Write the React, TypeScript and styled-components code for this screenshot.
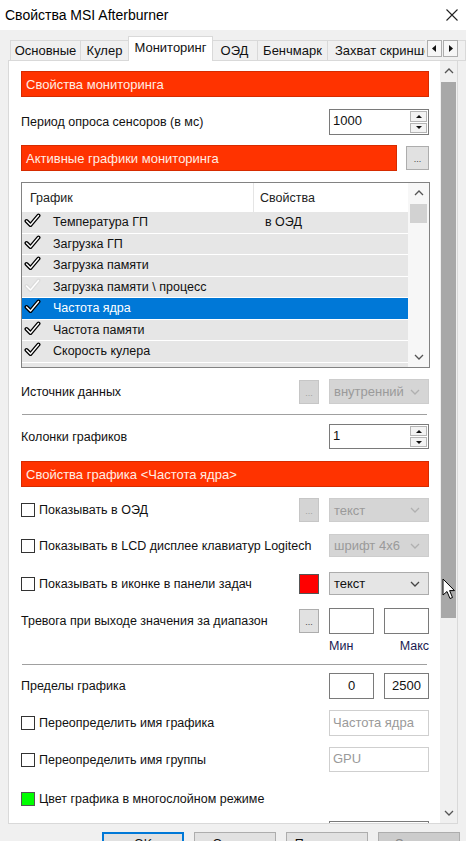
import styled, { createGlobalStyle } from "styled-components";

const GlobalStyle = createGlobalStyle`
  html, body {
    margin: 0;
    padding: 0;
  }
  body {
    font-family: "Liberation Sans", Arial, sans-serif;
    font-size: 12.5px;
    color: #111;
    background: #f0f0f0;
  }
  * {
    box-sizing: border-box;
  }
`;

interface IGraph {
  name: string;
  props?: string;
  checked: boolean;
  selected?: boolean;
}

const graphs: IGraph[] = [
  { name: "Температура ГП", props: "в ОЭД", checked: true },
  { name: "Загрузка ГП", checked: true },
  { name: "Загрузка памяти", checked: true },
  { name: "Загрузка памяти \\ процесс", checked: false },
  { name: "Частота ядра", checked: true, selected: true },
  { name: "Частота памяти", checked: true },
  { name: "Скорость кулера", checked: true },
];

const tabs = [
  { label: "Основные", w: 71 },
  { label: "Кулер", w: 48 },
  { label: "Мониторинг", w: 85, active: true },
  { label: "ОЭД", w: 46 },
  { label: "Бенчмарк", w: 70 },
];

function Chevron({ dir = "down", color = "#606060" }: { dir?: "up" | "down"; color?: string }) {
  return (
    <svg width="10" height="6" viewBox="0 0 10 6">
      <path
        d={dir === "down" ? "M1 1 L5 5 L9 1" : "M1 5 L5 1 L9 5"}
        fill="none"
        stroke={color}
        strokeWidth="1.3"
      />
    </svg>
  );
}

function CheckMark({ faint }: { faint?: boolean }) {
  return (
    <svg width="17" height="15" viewBox="0 0 17 15">
      <path
        d="M2.5 8 L6.5 12 L14.5 2.5"
        fill="none"
        stroke={faint ? "#dcdcdc" : "#000"}
        strokeWidth="4"
        strokeLinecap="round"
        strokeLinejoin="round"
      />
      <path
        d="M2.5 8 L6.5 12 L14.5 2.5"
        fill="none"
        stroke="#fff"
        strokeWidth="1.4"
        strokeLinecap="round"
        strokeLinejoin="round"
      />
    </svg>
  );
}

function Triangle({ dir }: { dir: "up" | "down" | "left" | "right" }) {
  const d = {
    up: "M1 4 L4 1 L7 4 Z",
    down: "M1 1 L4 4 L7 1 Z",
    left: "M5 0 L1 3.5 L5 7 Z",
    right: "M2 0 L6 3.5 L2 7 Z",
  }[dir];
  const vertical = dir === "up" || dir === "down";
  return (
    <svg width={vertical ? 8 : 7} height={vertical ? 5 : 7} viewBox={vertical ? "0 0 8 5" : "0 0 7 7"}>
      <path d={d} fill="#111" />
    </svg>
  );
}

function Spinner({ value }: { value: string }) {
  return (
    <SpinWrap>
      <SpinInput>{value}</SpinInput>
      <SpinButtons>
        <SpinButton>
          <Triangle dir="up" />
        </SpinButton>
        <SpinButton>
          <Triangle dir="down" />
        </SpinButton>
      </SpinButtons>
    </SpinWrap>
  );
}

function Combo({ value, disabled }: { value: string; disabled?: boolean }) {
  return (
    <Select $disabled={disabled}>
      <span>{value}</span>
      <Chevron color={disabled ? "#b0b0b0" : "#444"} />
    </Select>
  );
}

export default function App() {
  return (
    <Window>
      <GlobalStyle />
      <TitleBar>
        <span>Свойства MSI Afterburner</span>
        <svg width="12" height="12" viewBox="0 0 12 12">
          <path d="M0.5 0.5 L11.5 11.5 M11.5 0.5 L0.5 11.5" stroke="#222" strokeWidth="1.1" />
        </svg>
      </TitleBar>

      <TabStrip>
        {tabs.map((t) => (
          <Tab key={t.label} $w={t.w} $active={t.active}>
            {t.label}
          </Tab>
        ))}
        <LastTab>Захват скриншотов</LastTab>
        <TabArrows>
          <TabArrow>
            <Triangle dir="left" />
          </TabArrow>
          <TabArrow>
            <Triangle dir="right" />
          </TabArrow>
        </TabArrows>
      </TabStrip>

      <Panel>
        <Content>
          <SectionBar>Свойства мониторинга</SectionBar>

          <Row $mt={12} $h={26}>
            <Label>Период опроса сенсоров (в мс)</Label>
            <Cell $col={3}>
              <Spinner value="1000" />
            </Cell>
          </Row>

          <BarRow>
            <SectionBar $grow>Активные графики мониторинга</SectionBar>
            <DotsButton $w={23}>...</DotsButton>
          </BarRow>

          <ListBox>
            <ListBody>
              <ListHeader>
                <HeaderCell>График</HeaderCell>
                <HeaderCell $divider>Свойства</HeaderCell>
              </ListHeader>
              {graphs.map((g) => (
                <ListRow key={g.name} $selected={g.selected}>
                  <CheckCell>
                    <CheckMark faint={!g.checked} />
                  </CheckCell>
                  <span>{g.name}</span>
                  <PropCell>{g.props}</PropCell>
                </ListRow>
              ))}
              <ListRow />
            </ListBody>
            <ListScroll>
              <ScrollArrow>
                <Chevron dir="up" color="#555" />
              </ScrollArrow>
              <ListThumb />
              <ScrollSpacer />
              <ScrollArrow>
                <Chevron color="#555" />
              </ScrollArrow>
            </ListScroll>
          </ListBox>

          <Row $mt={11} $h={25}>
            <Label>Источник данных</Label>
            <DotsButton $disabled>...</DotsButton>
            <Combo value="внутренний" disabled />
          </Row>

          <Separator $mt={10} />

          <Row $mt={9} $h={25}>
            <Label>Колонки графиков</Label>
            <Cell $col={3}>
              <Spinner value="1" />
            </Cell>
          </Row>

          <SectionBar $mt={12}>Свойства графика &lt;Частота ядра&gt;</SectionBar>

          <Row $mt={11} $h={23}>
            <CheckLabel>
              <Box />
              Показывать в ОЭД
            </CheckLabel>
            <DotsButton $disabled>...</DotsButton>
            <Combo value="текст" disabled />
          </Row>

          <Row $mt={13} $h={23}>
            <CheckLabel $wide>
              <Box />
              Показывать в LCD дисплее клавиатур Logitech
            </CheckLabel>
            <Cell $col={3}>
              <Combo value="шрифт 4x6" disabled />
            </Cell>
          </Row>

          <Row $mt={15} $h={23}>
            <CheckLabel>
              <Box />
              Показывать в иконке в панели задач
            </CheckLabel>
            <Swatch $color="#ff0000" $size={20} />
            <Combo value="текст" />
          </Row>

          <Row $mt={13} $h={26}>
            <Label>Тревога при выходе значения за диапазон</Label>
            <DotsButton>...</DotsButton>
            <Pair>
              <TextBox />
              <TextBox />
            </Pair>
          </Row>

          <Row $mt={5} $h={16}>
            <Cell $col={3}>
              <RangeLabels>
                <span>Мин</span>
                <span>Макс</span>
              </RangeLabels>
            </Cell>
          </Row>

          <Separator $mt={9} />

          <Row $mt={8} $h={26}>
            <Label>Пределы графика</Label>
            <Cell $col={3}>
              <Pair>
                <TextBox $center>0</TextBox>
                <TextBox $center>2500</TextBox>
              </Pair>
            </Cell>
          </Row>

          <Row $mt={11} $h={26}>
            <CheckLabel>
              <Box />
              Переопределить имя графика
            </CheckLabel>
            <Cell $col={3}>
              <TextBox $disabled>Частота ядра</TextBox>
            </Cell>
          </Row>

          <Row $mt={11} $h={25}>
            <CheckLabel>
              <Box />
              Переопределить имя группы
            </CheckLabel>
            <Cell $col={3}>
              <TextBox $disabled>GPU</TextBox>
            </Cell>
          </Row>

          <Row $mt={18} $h={17}>
            <CheckLabel>
              <Swatch $color="#00ff00" $size={14} />
              Цвет графика в многослойном режиме
            </CheckLabel>
          </Row>

          <Row $mt={14} $h={26}>
            <Cell $col={3}>
              <TextBox />
            </Cell>
          </Row>
        </Content>

        <MainScroll>
          <ScrollArrow $h={20}>
            <Chevron dir="up" color="#555" />
          </ScrollArrow>
          <MainThumb />
          <ScrollSpacer />
          <ScrollArrow $h={20}>
            <Chevron color="#555" />
          </ScrollArrow>
        </MainScroll>
      </Panel>

      <ButtonBar>
        <DialogButton $primary>OK</DialogButton>
        <DialogButton>Отмена</DialogButton>
        <DialogButton>Применить</DialogButton>
        <DialogButton $disabled>Справка</DialogButton>
      </ButtonBar>

      <Cursor width="14" height="22" viewBox="0 0 14 22">
        <path
          d="M1 1 L1 17 L5 13.5 L8 20.5 L10.5 19.5 L7.6 12.6 L12.5 12.6 Z"
          fill="#fff"
          stroke="#000"
          strokeWidth="1"
          strokeLinejoin="round"
        />
      </Cursor>
    </Window>
  );
}

const Window = styled.div`
  position: relative;
  display: flex;
  flex-direction: column;
  width: 466px;
  height: 841px;
  overflow: hidden;
  background: #f0f0f0;

  & > * {
    flex-shrink: 0;
  }
`;

const TitleBar = styled.div`
  display: flex;
  align-items: center;
  justify-content: space-between;
  height: 30px;
  padding: 0 8px 0 5px;
  background: #fff;
  font-size: 14px;
  color: #000;
`;

const TabStrip = styled.div`
  position: relative;
  z-index: 1;
  display: flex;
  align-items: flex-end;
  height: 31px;
  padding-left: 10px;
  margin-bottom: -1px;
`;

const Tab = styled.div<{ $w: number; $active?: boolean }>`
  position: relative;
  flex: none;
  display: flex;
  align-items: center;
  justify-content: center;
  width: ${(p) => p.$w}px;
  height: ${(p) => (p.$active ? 25 : 21)}px;
  margin: 0 ${(p) => (p.$active ? -1 : 0)}px;
  border: 1px solid #d9d9d9;
  border-bottom: ${(p) => (p.$active ? "none" : "1px solid #d9d9d9")};
  border-left: ${(p) => (p.$active ? "1px solid #d9d9d9" : "none")};
  background: ${(p) => (p.$active ? "#fff" : "#f0f0f0")};
  z-index: ${(p) => (p.$active ? 2 : 1)};
  padding-bottom: ${(p) => (p.$active ? 4 : 0)}px;
  font-size: 13px;
  white-space: nowrap;

  &:first-child {
    border-left: 1px solid #d9d9d9;
  }
`;

const LastTab = styled.div`
  flex: 1;
  height: 21px;
  display: flex;
  align-items: center;
  padding-left: 7px;
  border: 1px solid #d9d9d9;
  border-left: none;
  background: #f0f0f0;
  overflow: hidden;
  white-space: nowrap;
  font-size: 13px;
`;

const TabArrows = styled.div`
  position: absolute;
  right: 8px;
  top: 10px;
  display: flex;
  gap: 1px;
  padding-left: 2px;
  background: #f0f0f0;
`;

const TabArrow = styled.div`
  display: flex;
  align-items: center;
  justify-content: center;
  width: 15px;
  height: 17px;
  border: 1px solid #adadad;
  background: #f6f6f6;
`;

const Panel = styled.div`
  display: flex;
  height: 764px;
  margin: 0 8px;
  background: #fff;
  border: 1px solid #d9d9d9;
`;

const Content = styled.div`
  flex: 1;
  display: flex;
  flex-direction: column;
  padding: 10px 11px 0 12px;
  overflow: hidden;

  & > * {
    flex-shrink: 0;
  }
`;

const SectionBar = styled.div<{ $mt?: number; $grow?: boolean }>`
  flex: ${(p) => (p.$grow ? "1 0 0" : "none")};
  display: flex;
  align-items: center;
  height: 26px;
  margin-top: ${(p) => p.$mt ?? 0}px;
  padding-left: 4px;
  background: #ff3300;
  border: 1px solid #d62b00;
  color: #ffeee4;
  font-size: 13px;
`;

const BarRow = styled.div`
  display: flex;
  align-items: center;
  gap: 9px;
  height: 26px;
  margin-top: 10px;
`;

const Row = styled.div<{ $mt: number; $h: number }>`
  display: grid;
  grid-template-columns: 1fr 20px 100px;
  column-gap: 10px;
  align-items: center;
  height: ${(p) => p.$h}px;
  margin-top: ${(p) => p.$mt}px;
`;

const Cell = styled.div<{ $col: number }>`
  grid-column: ${(p) => p.$col};
  height: 100%;
`;

const Label = styled.div`
  grid-column: 1;
  white-space: nowrap;
  color: #111;
`;

const CheckLabel = styled.div<{ $wide?: boolean }>`
  grid-column: ${(p) => (p.$wide ? "1 / span 2" : "1")};
  display: flex;
  align-items: center;
  gap: 4px;
  white-space: nowrap;
  color: #111;
`;

const Box = styled.span`
  flex: none;
  width: 14px;
  height: 14px;
  border: 1px solid #333;
  background: #fff;
`;

const Swatch = styled.span<{ $color: string; $size: number }>`
  flex: none;
  width: ${(p) => p.$size}px;
  height: ${(p) => p.$size}px;
  background: ${(p) => p.$color};
  border: 1px solid #555;
`;

const DotsButton = styled.div<{ $w?: number; $disabled?: boolean }>`
  flex: none;
  display: flex;
  align-items: flex-end;
  justify-content: center;
  width: ${(p) => p.$w ?? 20}px;
  height: 24px;
  padding-bottom: 5px;
  background: ${(p) => (p.$disabled ? "#d4d4d4" : "#e1e1e1")};
  border: 1px solid ${(p) => (p.$disabled ? "#c6c6c6" : "#adadad")};
  color: ${(p) => (p.$disabled ? "#a0a0a0" : "#444")};
  font-size: 9px;
  line-height: 1;
`;

const Select = styled.div<{ $disabled?: boolean }>`
  display: flex;
  align-items: center;
  justify-content: space-between;
  height: 100%;
  padding: 0 8px 0 4px;
  background: ${(p) => (p.$disabled ? "#d5d5d5" : "#e5e5e5")};
  border: 1px solid ${(p) => (p.$disabled ? "#cdcdcd" : "#acacac")};
  color: ${(p) => (p.$disabled ? "#9a9a9a" : "#111")};
  font-size: 13px;
`;

const SpinWrap = styled.div`
  display: flex;
  height: 100%;
  border: 1px solid #7a7a7a;
  background: #fff;
`;

const SpinInput = styled.div`
  flex: 1;
  padding: 3px 0 0 3px;
  font-size: 13px;
  color: #111;
`;

const SpinButtons = styled.div`
  display: flex;
  flex-direction: column;
  gap: 1px;
  width: 18px;
  padding: 1px 1px 1px 0;
`;

const SpinButton = styled.div`
  flex: 1;
  display: flex;
  align-items: center;
  justify-content: center;
  background: #f3f3f3;
  border: 1px solid #b5b5b5;
`;

const Pair = styled.div`
  display: flex;
  gap: 10px;
  height: 100%;
`;

const TextBox = styled.div<{ $center?: boolean; $disabled?: boolean }>`
  flex: 1;
  display: flex;
  align-items: center;
  justify-content: ${(p) => (p.$center ? "center" : "flex-start")};
  height: 100%;
  padding: 0 3px 2px;
  background: #fff;
  border: 1px solid ${(p) => (p.$disabled ? "#cfcfcf" : "#7a7a7a")};
  color: ${(p) => (p.$disabled ? "#9a9a9a" : "#111")};
  font-size: 13px;
`;

const RangeLabels = styled.div`
  display: flex;
  justify-content: space-between;
  font-size: 12.5px;
  color: #1a1a50;
`;

const Separator = styled.div<{ $mt: number }>`
  height: 1px;
  margin: ${(p) => p.$mt}px 2px 0 1px;
  background: #a0a0a0;
`;

const ListBox = styled.div`
  display: flex;
  height: 186px;
  margin: 11px -1px 0 0;
  border: 1px solid #828282;
  overflow: hidden;
`;

const ListBody = styled.div`
  flex: 1;
  display: flex;
  flex-direction: column;
  overflow: hidden;
`;

const ListHeader = styled.div`
  flex: none;
  display: grid;
  grid-template-columns: 231px 1fr;
  height: 29px;
  background: #fff;
`;

const HeaderCell = styled.div<{ $divider?: boolean }>`
  display: flex;
  align-items: center;
  padding-left: ${(p) => (p.$divider ? 6 : 8)}px;
  border-left: ${(p) => (p.$divider ? "1px solid #e5e5e5" : "none")};
  color: #222;
`;

const ListRow = styled.div<{ $selected?: boolean }>`
  flex: none;
  display: grid;
  grid-template-columns: 31px 205px 1fr;
  align-items: center;
  height: 20.5px;
  margin-bottom: 1px;
  background: ${(p) => (p.$selected ? "#0078d7" : "#e6e6e6")};
  color: ${(p) => (p.$selected ? "#fff" : "#111")};
  white-space: nowrap;
`;

const CheckCell = styled.div`
  display: flex;
  align-items: center;
  padding: 0 0 3px 2px;
`;

const PropCell = styled.div`
  padding-left: 7px;
`;

const ListScroll = styled.div`
  flex: none;
  display: flex;
  flex-direction: column;
  width: 21px;
  background: #f7f7f7;
`;

const ScrollArrow = styled.div<{ $h?: number }>`
  flex: none;
  display: flex;
  align-items: center;
  justify-content: center;
  height: ${(p) => p.$h ?? 20}px;
`;

const ScrollSpacer = styled.div`
  flex: 1;
`;

const ListThumb = styled.div`
  flex: none;
  height: 19px;
  margin: 1px 2px 0;
  background: #d2d2d2;
`;

const MainScroll = styled.div`
  flex: none;
  display: flex;
  flex-direction: column;
  width: 17px;
  background: #f0f0f0;
`;

const MainThumb = styled.div`
  flex: none;
  height: 536px;
  margin: 1px 1px 0;
  background: #a8a8a8;
`;

const ButtonBar = styled.div`
  display: flex;
  gap: 10px;
  margin-top: 8px;
  padding-left: 102px;
`;

const DialogButton = styled.div<{ $primary?: boolean; $disabled?: boolean }>`
  display: flex;
  align-items: center;
  justify-content: center;
  width: 82px;
  height: 23px;
  background: ${(p) => (p.$disabled ? "#cccccc" : "#e1e1e1")};
  border: ${(p) => (p.$primary ? "2px solid #0078d7" : "1px solid #adadad")};
  color: ${(p) => (p.$disabled ? "#8a8a8a" : "#111")};
  font-size: 12.5px;
`;

const Cursor = styled.svg`
  position: absolute;
  left: 442px;
  top: 578px;
`;
